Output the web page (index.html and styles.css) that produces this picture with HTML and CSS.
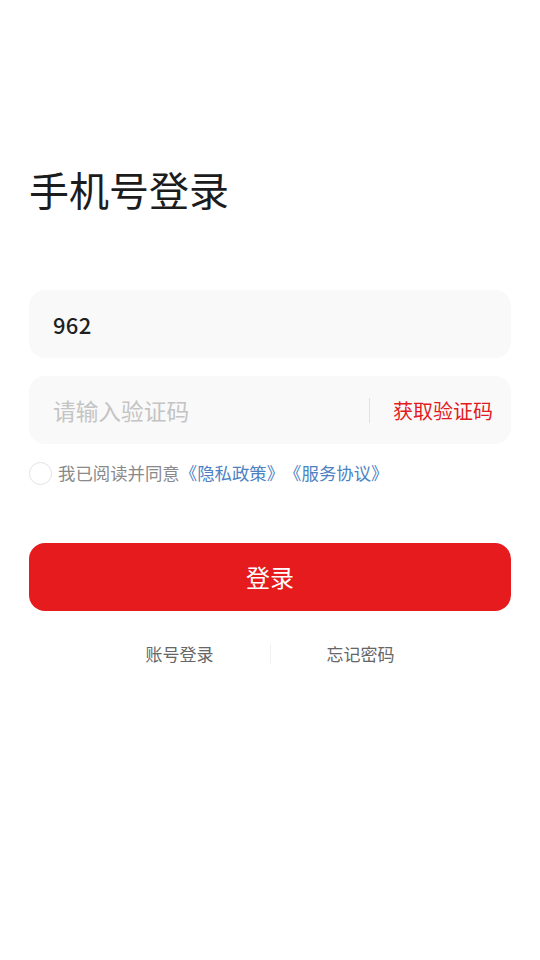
FILE: index.html
```html
<!DOCTYPE html>
<html lang="zh-CN">
<head>
<meta charset="utf-8">
<title>手机号登录</title>
<link rel="stylesheet" href="styles.css">
</head>
<body>
<main class="page">
  <h1 class="title">手机号登录</h1>
  <div class="field">
    <span class="value">962</span>
  </div>
  <div class="field field-code">
    <span class="placeholder">请输入验证码</span>
    <span class="vdivider"></span>
    <span class="get-code">获取验证码</span>
  </div>
  <div class="agree">
    <span class="check"></span>
    <span class="agree-text">我已阅读并同意<span class="link">《隐私政策》</span><span class="link">《服务协议》</span></span>
  </div>
  <button class="submit">登录</button>
  <div class="others">
    <span class="other">账号登录</span>
    <span class="sep"></span>
    <span class="other">忘记密码</span>
  </div>
</main>
</body>
</html>
```
FILE: styles.css
```css
* { box-sizing: border-box; }
html, body {
  margin: 0;
  padding: 0;
  background: #ffffff;
}
body {
  font-family: "Noto Sans CJK SC", "Noto Sans", sans-serif;
  color: #1a1a1a;
  text-spacing-trim: space-all;
}
.page {
  padding: 160px 29px 0 29px;
  display: flex;
  flex-direction: column;
}
.title {
  margin: 0;
  font-size: 40px;
  font-weight: 400;
  line-height: 58px;
  color: #1c1c1c;
}
.field {
  margin-top: 72px;
  height: 68px;
  border-radius: 16px;
  background: #f9f9f9;
  display: flex;
  align-items: center;
  padding: 0 18px 0 24px;
}
.field-code {
  margin-top: 18px;
}
.value {
  font-size: 22px;
  color: #1f1f1f;
  font-weight: 500;
  letter-spacing: 0.3px;
}
.placeholder {
  flex: 1;
  font-size: 22.7px;
  color: #c4c4c4;
}
.vdivider {
  width: 1px;
  height: 25px;
  background: #dfe1ee;
  margin-right: 23px;
}
.get-code {
  font-size: 20px;
  color: #e21b1f;
}
.agree {
  margin-top: 17px;
  display: flex;
  align-items: center;
}
.check {
  width: 23px;
  height: 23px;
  border-radius: 50%;
  border: 1.5px solid #e3e3e3;
  margin-right: 6px;
  flex: none;
}
.agree-text {
  font-size: 17.4px;
  color: #8a8a8a;
  line-height: 24px;
}
.link {
  color: #4d82c2;
}
.submit {
  margin-top: 58px;
  height: 68px;
  border: none;
  border-radius: 16px;
  background: #e61b1d;
  color: #ffffff;
  font-family: "Noto Sans CJK SC", "Noto Sans", sans-serif;
  font-size: 24px;
  padding: 0 0 2px 0;
}
.others {
  margin-top: 30px;
  display: flex;
  justify-content: center;
  align-items: center;
}
.other {
  width: 180px;
  text-align: center;
  font-size: 17px;
  color: #666666;
}
.sep {
  width: 1px;
  height: 20px;
  background: #f0f0f0;
}
```
